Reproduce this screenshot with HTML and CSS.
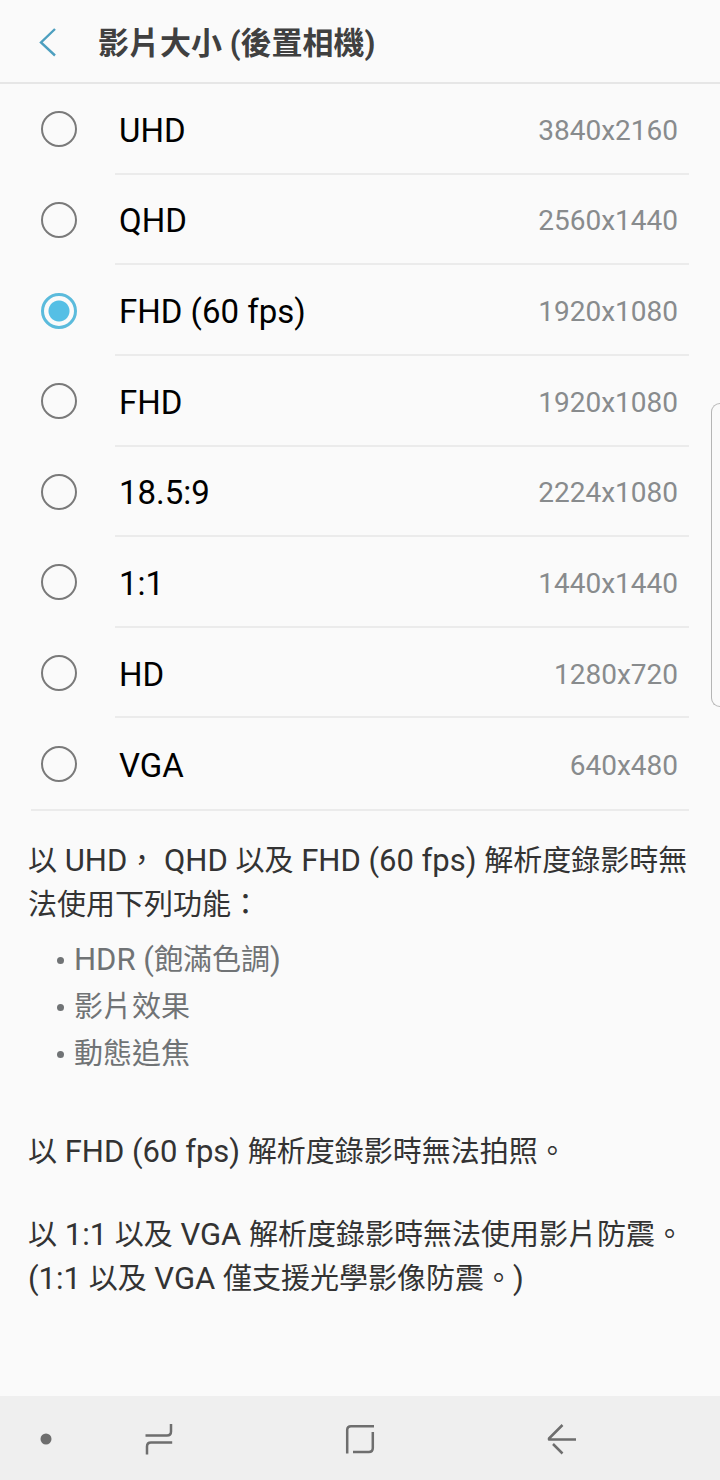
FILE: index.html
```html
<!DOCTYPE html>
<html lang="zh-Hant">
<head>
<meta charset="utf-8">
<meta name="viewport" content="width=device-width, initial-scale=1">
<title>影片大小 (後置相機)</title>
<link rel="stylesheet" href="styles.css">
</head>
<body>
<header class="topbar">
  <button class="back" type="button" aria-label="返回">
    <svg width="20" height="32" viewBox="0 0 20 32" fill="none" stroke="#4d9fbf" stroke-width="2.4"><path d="M17 3 3 16.500 17 29.500"/></svg>
  </button>
  <h1 class="title">影片大小 (後置相機)</h1>
</header>
<main class="content">
  <form class="options">
    <div class="option"><input class="radio" type="radio" name="size" id="uhd"><label class="row" for="uhd"><span class="name">UHD</span><span class="value">3840x2160</span></label></div>
    <div class="option"><input class="radio" type="radio" name="size" id="qhd"><label class="row" for="qhd"><span class="name">QHD</span><span class="value">2560x1440</span></label></div>
    <div class="option"><input class="radio" type="radio" name="size" id="fhd60" checked><label class="row" for="fhd60"><span class="name">FHD (60 fps)</span><span class="value">1920x1080</span></label></div>
    <div class="option"><input class="radio" type="radio" name="size" id="fhd"><label class="row" for="fhd"><span class="name">FHD</span><span class="value">1920x1080</span></label></div>
    <div class="option"><input class="radio" type="radio" name="size" id="wide"><label class="row" for="wide"><span class="name">18.5:9</span><span class="value">2224x1080</span></label></div>
    <div class="option"><input class="radio" type="radio" name="size" id="square"><label class="row" for="square"><span class="name">1:1</span><span class="value">1440x1440</span></label></div>
    <div class="option"><input class="radio" type="radio" name="size" id="hd"><label class="row" for="hd"><span class="name">HD</span><span class="value">1280x720</span></label></div>
    <div class="option"><input class="radio" type="radio" name="size" id="vga"><label class="row" for="vga"><span class="name">VGA</span><span class="value">640x480</span></label></div>
  </form>
  <section class="notes">
    <p class="note">以<span class="latin"> UHD</span>，<span class="latin"> QHD </span>以及<span class="latin"> FHD (60 fps) </span>解析度錄影時無法使用下列功能：</p>
    <ul class="features">
      <li class="feature"><span><span class="latin">HDR (</span>飽滿色調<span class="latin">)</span></span></li>
      <li class="feature">影片效果</li>
      <li class="feature">動態追焦</li>
    </ul>
    <p class="note">以<span class="latin"> FHD (60 fps) </span>解析度錄影時無法拍照。</p>
    <p class="note">以<span class="latin"> 1:1 </span>以及<span class="latin"> VGA </span>解析度錄影時無法使用影片防震。<br><span class="latin">(1:1 </span>以及<span class="latin"> VGA </span>僅支援光學影像防震。<span class="latin">)</span></p>
  </section>
</main>
<div class="edge-handle"></div>
<nav class="navbar">
  <button class="nav-button" type="button" aria-label="隱藏導覽列">
    <svg width="12" height="12" viewBox="0 0 12 12"><circle cx="6" cy="6" r="5.500" fill="#6e6e6e"/></svg>
  </button>
  <button class="nav-button" type="button" aria-label="最近使用的應用程式">
    <svg width="32" height="32" viewBox="0 0 32 32" fill="none" stroke="#6e6e6e" stroke-width="2.500"><path d="M2.500 12.500H24Q28 12.500 28 8.500V1M29.200 19.500H8Q4 19.500 4 23.500V31.500"/></svg>
  </button>
  <button class="nav-button" type="button" aria-label="首頁">
    <svg width="32" height="32" viewBox="0 0 32 32" fill="none" stroke="#6e6e6e" stroke-width="2.500"><path d="M3.200 30.500V7Q3.200 3.200 7 3.200H30M28.800 9V25Q28.800 29 24.800 29H9"/></svg>
  </button>
  <button class="nav-button" type="button" aria-label="返回">
    <svg width="32" height="32" viewBox="0 0 32 32" fill="none" stroke="#6e6e6e" stroke-width="2.500" stroke-linejoin="round"><path d="M17.500 2 4 15.500V16.500H31M8 21 17.500 30.500"/></svg>
  </button>
</nav>
</body>
</html>
```
FILE: styles.css
```css
* {
  box-sizing: border-box;
}

body {
  margin: 0;
  min-height: 100vh;
  display: flex;
  flex-direction: column;
  background: #fafafa;
  color: #333;
  font-family: Roboto, "Noto Sans CJK TC", sans-serif;
  overflow-x: hidden;
  position: relative;
}

button {
  padding: 0;
  border: 0;
  background: none;
  display: flex;
  align-items: center;
  justify-content: center;
}

.topbar {
  flex: none;
  display: flex;
  align-items: center;
  gap: 40px;
  height: 84px;
  padding: 2px 38px 0;
  border-bottom: 2px solid #e6e6e6;
}

.title {
  margin: 0;
  padding-top: 4px;
  color: #404040;
  font-size: 31px;
  line-height: 44px;
  font-weight: 700;
}

.content {
  flex: 1 0 auto;
}

.options {
  display: grid;
  grid-auto-rows: 1fr;
  min-height: 727px;
  margin: 0 31px;
  border-bottom: 2px solid #ebebeb;
}

.option {
  display: flex;
  align-items: center;
  gap: 38px;
  padding-left: 10px;
}

.radio {
  appearance: none;
  flex: none;
  width: 36px;
  height: 36px;
  margin: 0;
  border: 2px solid #7a7a7a;
  border-radius: 50%;
}

.radio:checked {
  border-width: 3px;
  border-color: #5bbbdc;
  background: radial-gradient(circle, #55bfe5 10px, #fafafa 11px);
}

.row {
  flex: 1;
  align-self: stretch;
  display: flex;
  align-items: center;
  justify-content: space-between;
  padding: 4px 11px 0 4px;
  border-bottom: 2px solid #ebebeb;
}

.option:last-child .row {
  border-bottom: 0;
}

.name {
  color: #000;
  font-size: 33px;
}

.value {
  color: #888b8d;
  font-size: 28px;
}

.notes {
  padding: 28px 28px 0;
  font-size: 29px;
  line-height: 44px;
}

.latin {
  font-size: 31px;
  line-height: 1;
}

.note {
  margin: 0 0 39px;
}

.features {
  list-style: none;
  margin: -29px 0 52px;
  padding: 0 0 0 29px;
  color: #707375;
}

.feature {
  display: flex;
  align-items: center;
  gap: 10px;
  line-height: 47px;
}

.feature::before {
  content: "";
  width: 7px;
  height: 7px;
  border-radius: 50%;
  background: #707375;
}

.edge-handle {
  position: absolute;
  top: 403px;
  right: 0;
  width: 9px;
  height: 304px;
  border: 1px solid #b5b5b5;
  border-right: 0;
  border-radius: 12px 0 0 12px;
}

.navbar {
  flex: none;
  display: grid;
  grid-template-columns: 92px 134px 1fr 134px 92px;
  height: 84px;
  padding-top: 2px;
  background: #efefef;
}
```
